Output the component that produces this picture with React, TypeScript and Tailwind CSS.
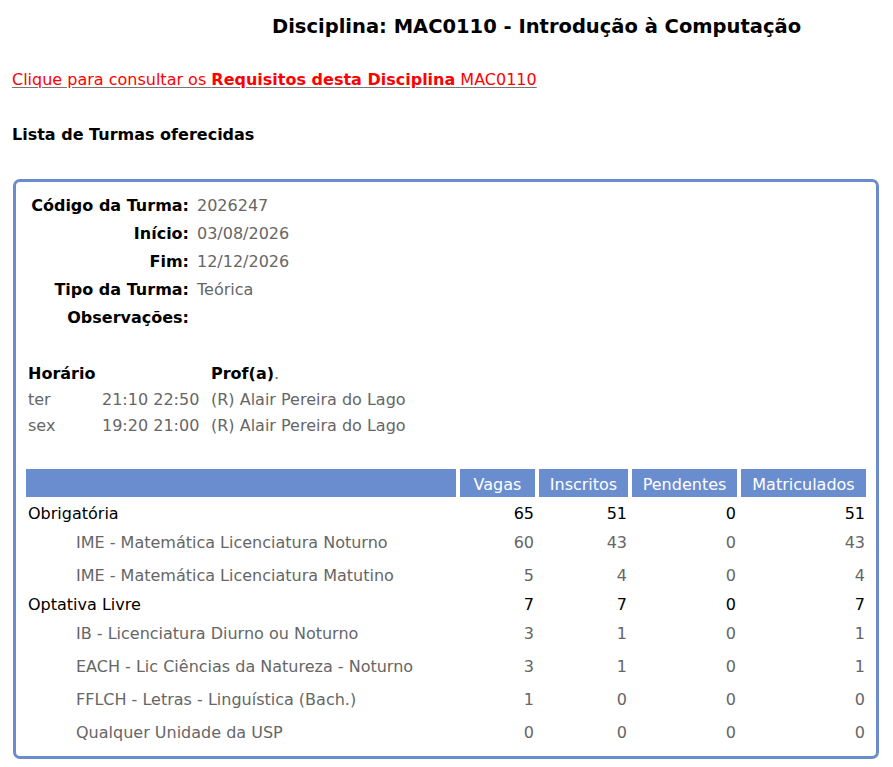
import React from "react";

const rows: { label: string; main: boolean; v: number[] }[] = [
  { label: "Obrigatória", main: true, v: [65, 51, 0, 51] },
  { label: "IME - Matemática Licenciatura Noturno", main: false, v: [60, 43, 0, 43] },
  { label: "IME - Matemática Licenciatura Matutino", main: false, v: [5, 4, 0, 4] },
  { label: "Optativa Livre", main: true, v: [7, 7, 0, 7] },
  { label: "IB - Licenciatura Diurno ou Noturno", main: false, v: [3, 1, 0, 1] },
  { label: "EACH - Lic Ciências da Natureza - Noturno", main: false, v: [3, 1, 0, 1] },
  { label: "FFLCH - Letras - Linguística (Bach.)", main: false, v: [1, 0, 0, 0] },
  { label: "Qualquer Unidade da USP", main: false, v: [0, 0, 0, 0] },
];

const info: [string, string][] = [
  ["Código da Turma:", "2026247"],
  ["Início:", "03/08/2026"],
  ["Fim:", "12/12/2026"],
  ["Tipo da Turma:", "Teórica"],
  ["Observações:", ""],
];

export default function App() {
  return (
    <div
      className="bg-white text-black text-[16px] w-[893px] min-h-[767px]"
      style={{ fontFamily: '"DejaVu Sans", Verdana, sans-serif' }}
    >
      <div className="h-[52px] pt-[2px] flex items-center pl-[272px] font-bold text-[19.5px]">
        Disciplina: MAC0110 - Introdução à Computação
      </div>
      <div className="h-[54px] pt-[2px] flex items-center pl-[12px]">
        <a href="#" className="text-[#ff0000] underline decoration-[#777] underline-offset-2">
          Clique para consultar os <b>Requisitos desta Disciplina</b> MAC0110
        </a>
      </div>
      <div className="h-[56px] pt-[2px] flex items-center pl-[12px] font-bold">
        Lista de Turmas oferecidas
      </div>
      <div className="mt-[17px] ml-[13px] w-[866px] border-[3px] border-[#6a8bcc] rounded-[7px] px-[10px] pt-[9px] pb-[8px]">
        <div className="grid grid-cols-[163px_auto] gap-x-[8px]">
          {info.map(([l, v]) => (
            <React.Fragment key={l}>
              <div className="h-[28px] pt-[2px] flex items-center justify-end font-bold">{l}</div>
              <div className="h-[28px] pt-[2px] flex items-center text-[#666]">{v}</div>
            </React.Fragment>
          ))}
        </div>
        <div className="mt-[29px] pl-[2px] grid grid-cols-[74px_109px_auto]">
          <div className="h-[26px] pt-[2px] flex items-center font-bold">Horário</div>
          <div className="h-[26px]"></div>
          <div className="h-[26px] pt-[2px] flex items-center">
            <b>Prof(a)</b>
            <span className="text-[#666]">.</span>
          </div>
          <div className="h-[26px] pt-[2px] flex items-center text-[#666]">ter</div>
          <div className="h-[26px] pt-[2px] flex items-center text-[#666]">21:10 22:50</div>
          <div className="h-[26px] pt-[2px] flex items-center text-[#666]">(R) Alair Pereira do Lago</div>
          <div className="h-[26px] pt-[2px] flex items-center text-[#666]">sex</div>
          <div className="h-[26px] pt-[2px] flex items-center text-[#666]">19:20 21:00</div>
          <div className="h-[26px] pt-[2px] flex items-center text-[#666]">(R) Alair Pereira do Lago</div>
        </div>
        <div className="mt-[31px] grid grid-cols-[430px_75px_89px_105px_125px] gap-x-[4px]">
          <div className="h-[28px] bg-[#6a8dd0]"></div>
          {["Vagas", "Inscritos", "Pendentes", "Matriculados"].map((h) => (
            <div key={h} className="h-[28px] pt-[3px] bg-[#6a8dd0] text-white flex items-center justify-center">
              {h}
            </div>
          ))}
          <div className="col-span-5 h-[3px]"></div>
          {rows.map((r) => (
            <React.Fragment key={r.label}>
              <div
                className={
                  r.main
                    ? "h-[25px] pt-[2px] flex items-center pl-[2px] text-black"
                    : "h-[33px] pt-[2px] flex items-center pl-[50px] text-[#666]"
                }
              >
                {r.label}
              </div>
              {r.v.map((n, i) => (
                <div
                  key={i}
                  className={
                    r.main
                      ? "h-[25px] pt-[2px] flex items-center justify-end pr-[1px] text-black"
                      : "h-[33px] pt-[2px] flex items-center justify-end pr-[1px] text-[#666]"
                  }
                >
                  {n}
                </div>
              ))}
            </React.Fragment>
          ))}
        </div>
      </div>
    </div>
  );
}
